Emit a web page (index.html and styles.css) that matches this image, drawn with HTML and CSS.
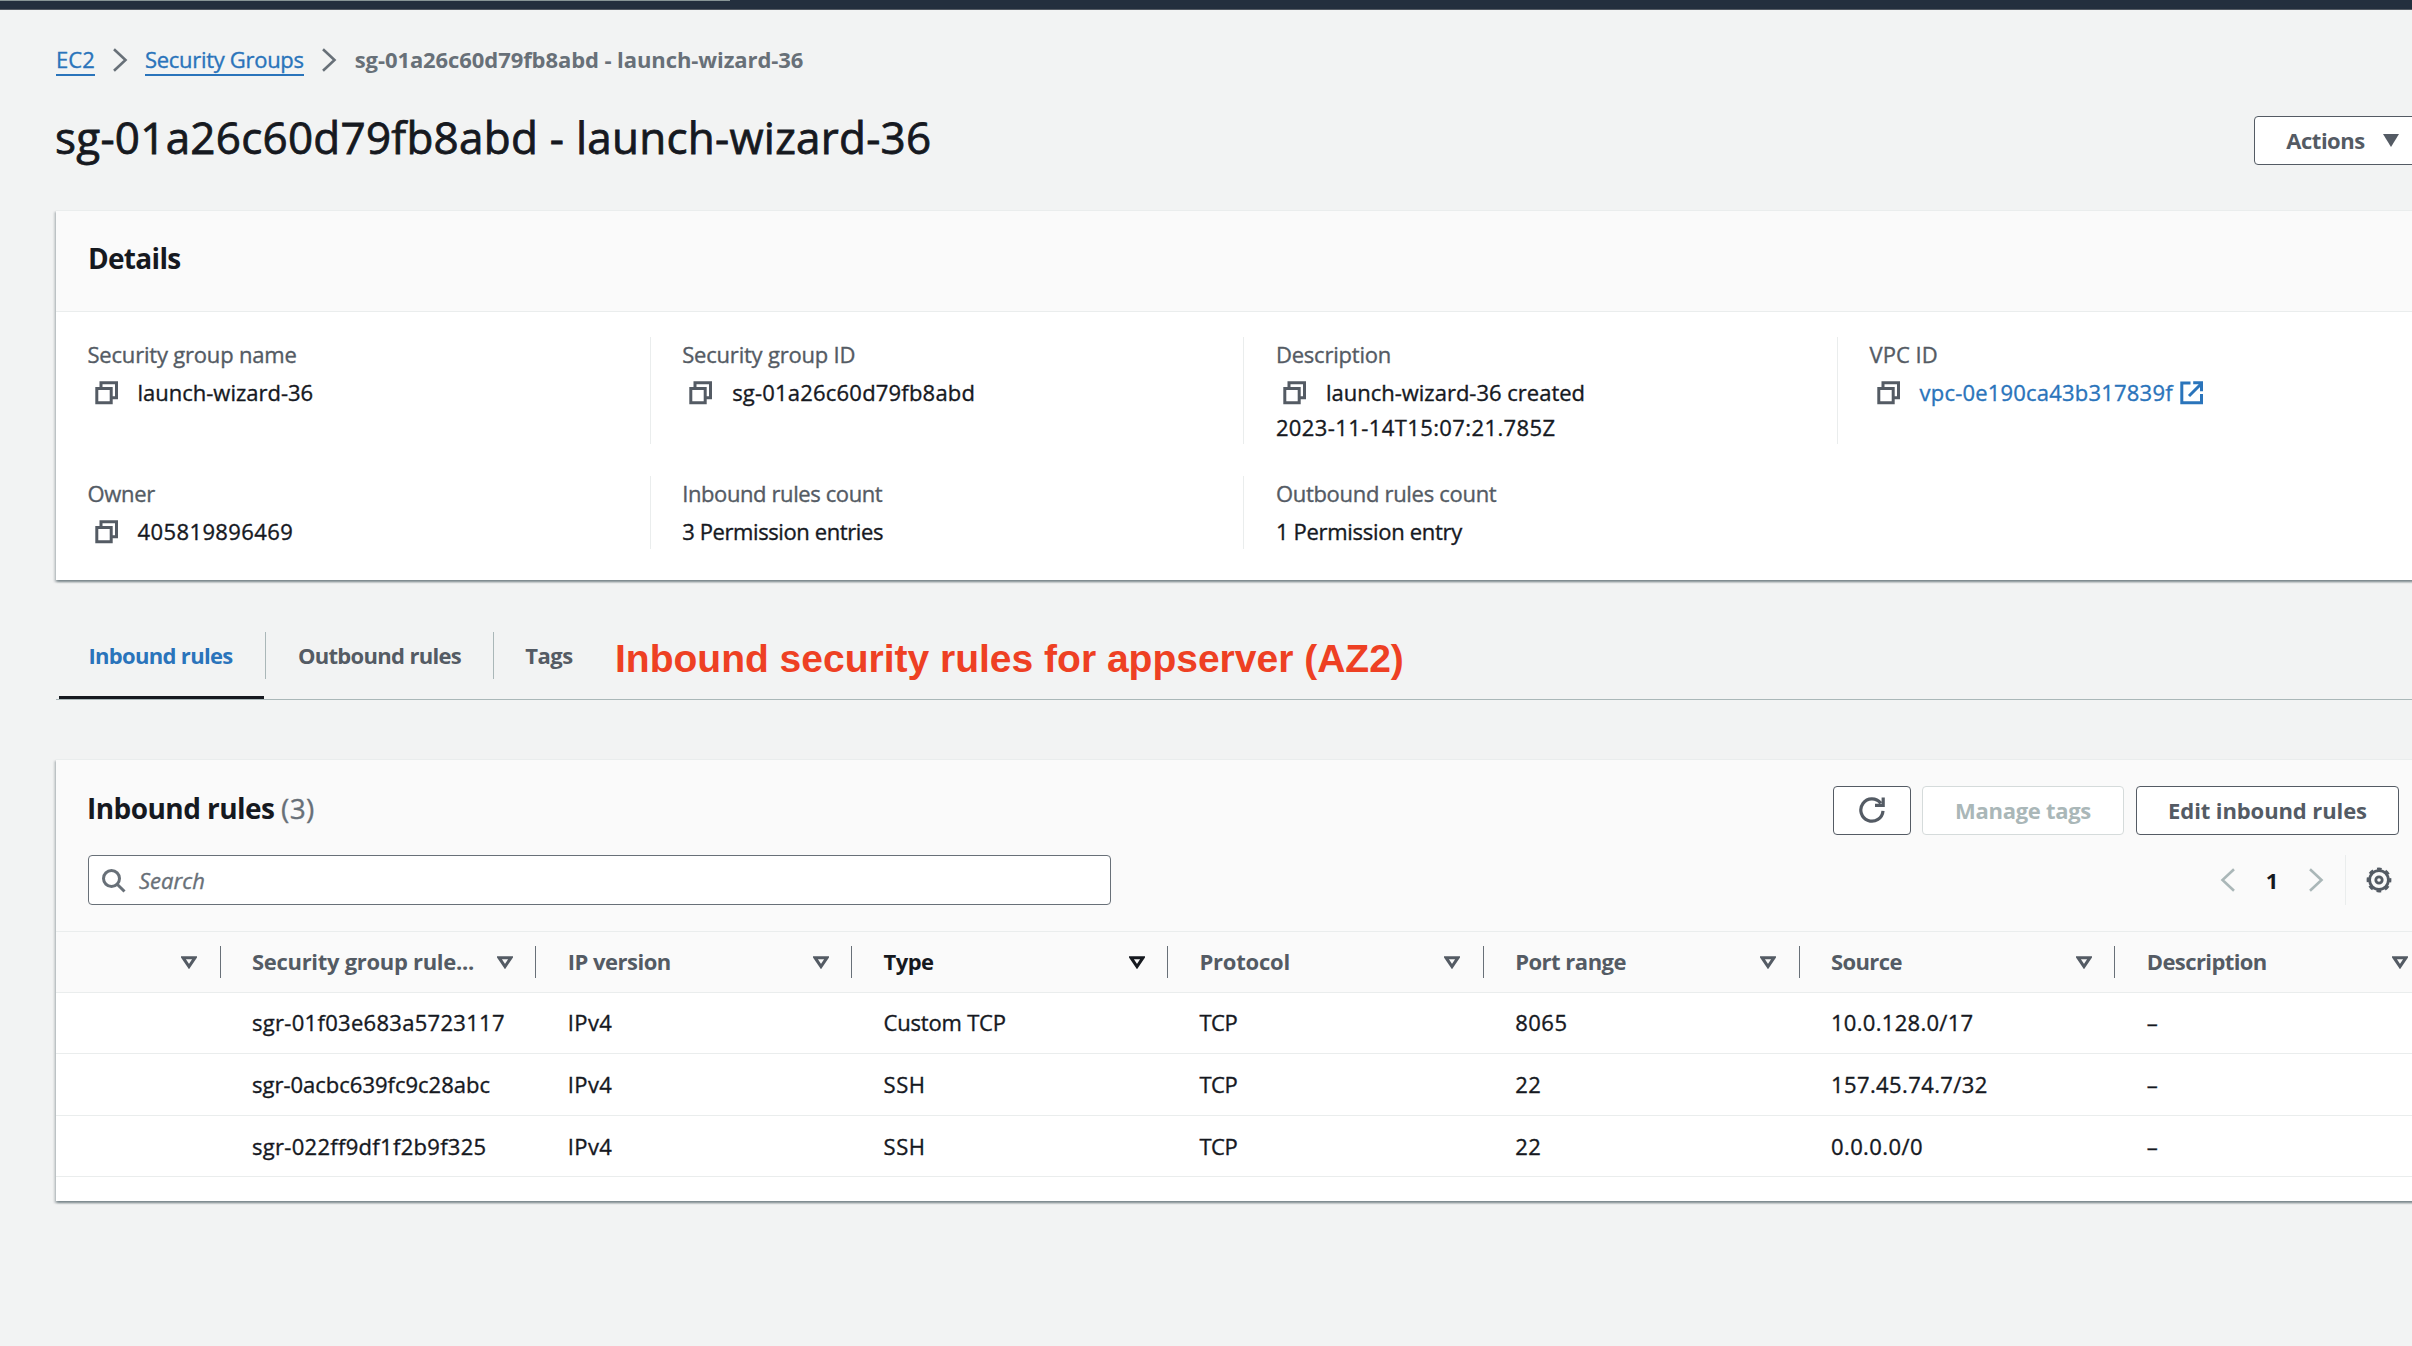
FILE: index.html
```html
<!DOCTYPE html>
<html lang="en">
<head>
<meta charset="utf-8">
<title>Security group - EC2</title>
<link rel="stylesheet" href="styles.css">
</head>
<body>
<svg class="defs" aria-hidden="true">
  <symbol id="copy" viewBox="0 0 24 24"><path d="M6 7V1.7h15.5v15h-5M1.8 7.4h14.4v14.3H1.8z"/></symbol>
  <symbol id="external" viewBox="0 0 24 24"><path d="M10.5 2H1.8v19.7h19.7V13M9 15 21 3M13.2 1.8h8.3v8.4"/></symbol>
  <symbol id="chevron" viewBox="0 0 16 24"><path d="M2 1.2 13.5 12 2 22.8"/></symbol>
  <symbol id="sort" viewBox="0 0 16 13"><path d="M2 1.7h12L8 10.6z"/></symbol>
</svg>

<div class="topbar"><div class="topbar-progress"></div></div>

<main class="page">
  <nav class="breadcrumb">
    <a class="crumb-link t1">EC2</a>
    <svg class="crumb-sep"><use href="#chevron"/></svg>
    <a class="crumb-link tm3">Security Groups</a>
    <svg class="crumb-sep"><use href="#chevron"/></svg>
    <span class="crumb-current">sg-01a26c60d79fb8abd - launch-wizard-36</span>
  </nav>

  <header class="page-header">
    <h1>sg-01a26c60d79fb8abd - launch-wizard-36</h1>
    <button class="btn btn-actions tm5">Actions<svg class="caret" viewBox="0 0 16 13"><path d="M0 0h16L8 13z"/></svg></button>
  </header>

  <section class="card details">
    <div class="details-header"><h2>Details</h2></div>
    <div class="details-grid">
      <div class="field"><div class="label tm2">Security group name</div><div class="value">
        <svg class="copy"><use href="#copy"/></svg>launch-wizard-36</div></div>
      <div class="field"><div class="label tm2">Security group ID</div><div class="value t2"><svg class="copy"><use href="#copy"/></svg>sg-01a26c60d79fb8abd</div></div>
      <div class="field"><div class="label tm2">Description</div><div class="value"><svg class="copy"><use href="#copy"/></svg>launch-wizard-36 created<br><span class="t4">2023-11-14T15:07:21.785Z</span></div></div>
      <div class="field"><div class="label">VPC ID</div><div class="value t2"><svg class="copy"><use href="#copy"/></svg><a class="link">vpc-0e190ca43b317839f<svg class="external"><use href="#external"/></svg></a></div></div>
      <div class="field"><div class="label tm3">Owner</div><div class="value t4"><svg class="copy"><use href="#copy"/></svg>405819896469</div></div>
      <div class="field"><div class="label tm4">Inbound rules count</div><div class="value tm4">3 Permission entries</div></div>
      <div class="field"><div class="label tm3">Outbound rules count</div><div class="value tm3">1 Permission entry</div></div>
    </div>
  </section>

  <div class="tabs">
    <div class="tab tab-active">Inbound rules</div>
    <div class="tab-divider"></div>
    <div class="tab tab-outbound">Outbound rules</div>
    <div class="tab-divider"></div>
    <div class="tab tab-tags tm5">Tags</div>
    <div class="annotation">Inbound security rules for appserver (AZ2)</div>
  </div>

  <section class="card rules">
    <div class="rules-header">
      <div class="rules-row">
        <h2>Inbound rules <span class="count">(3)</span></h2>
        <div class="buttons">
          <button class="btn btn-refresh"><svg class="refresh" viewBox="0 0 26 26"><path d="M24 13.8A11.1 11.1 0 1 1 21.7 6.2M24.2.5v7.8H16"/></svg></button>
          <button class="btn btn-manage tm3">Manage tags</button>
          <button class="btn btn-edit tm1">Edit inbound rules</button>
        </div>
      </div>
      <div class="rules-row filter-row">
        <div class="search">
          <svg class="search-icon" viewBox="0 0 24 24"><circle cx="9.5" cy="9.5" r="8"/><path d="m15.2 15.2 7.3 7.3"/></svg>
          <span class="placeholder">Search</span>
        </div>
        <div class="pager">
          <svg class="page-arrow page-prev"><use href="#chevron"/></svg>
          <span class="page-number">1</span>
          <svg class="page-arrow"><use href="#chevron"/></svg>
          <div class="pager-divider"></div>
          <svg class="gear" viewBox="0 0 26 26"><circle cx="13" cy="13" r="9.4"/><circle class="gear-teeth" cx="13" cy="13" r="11"/><circle cx="13" cy="13" r="3.2"/></svg>
        </div>
      </div>
    </div>

    <div class="table">
      <div class="tr thead">
        <div class="th"><span></span><svg class="sort"><use href="#sort"/></svg></div>
        <div class="th tm3"><span>Security group rule...</span><svg class="sort"><use href="#sort"/></svg></div>
        <div class="th tm5"><span>IP version</span><svg class="sort"><use href="#sort"/></svg></div>
        <div class="th th-sorted tm6"><span>Type</span><svg class="sort"><use href="#sort"/></svg></div>
        <div class="th tm2"><span>Protocol</span><svg class="sort"><use href="#sort"/></svg></div>
        <div class="th tm5"><span>Port range</span><svg class="sort"><use href="#sort"/></svg></div>
        <div class="th tm6"><span>Source</span><svg class="sort"><use href="#sort"/></svg></div>
        <div class="th tm6"><span>Description</span><svg class="sort"><use href="#sort"/></svg></div>
      </div>
      <div class="tr">
        <div class="td"></div><div class="td t3">sgr-01f03e683a5723117</div><div class="td t4">IPv4</div><div class="td tm2">Custom TCP</div><div class="td tm4">TCP</div><div class="td t5">8065</div><div class="td t3">10.0.128.0/17</div><div class="td">–</div>
      </div>
      <div class="tr tr-tall">
        <div class="td"></div><div class="td">sgr-0acbc639fc9c28abc</div><div class="td t4">IPv4</div><div class="td t5">SSH</div><div class="td tm4">TCP</div><div class="td t5">22</div><div class="td t4">157.45.74.7/32</div><div class="td">–</div>
      </div>
      <div class="tr tr-last">
        <div class="td"></div><div class="td t3">sgr-022ff9df1f2b9f325</div><div class="td t4">IPv4</div><div class="td t5">SSH</div><div class="td tm4">TCP</div><div class="td t5">22</div><div class="td t4">0.0.0.0/0</div><div class="td">–</div>
      </div>
    </div>
  </section>
</main>
</body>
</html>
```
FILE: styles.css
```css
* { box-sizing: border-box; }

body {
  margin: 0;
  width: 2412px;
  height: 1346px;
  overflow: hidden;
  background: #f2f3f3;
  color: #16191f;
  font: 22px/30px "Open Sans", "Noto Sans", sans-serif;
}

h1, h2 { margin: 0; }
svg { fill: none; stroke: currentColor; stroke-width: 3; flex: none; }
.defs { display: none; }

/* Slightly heavier regular weight */
.crumb-link, h1, .field, .td, .count, .placeholder { -webkit-text-stroke: 0.35px currentColor; }
h1 { -webkit-text-stroke-width: 0.8px; }

/* Letter-spacing steps, in tenths of a pixel (tm = negative) */
.t1 { letter-spacing: 0.1px; }
.t2 { letter-spacing: 0.2px; }
.t3 { letter-spacing: 0.3px; }
.t4 { letter-spacing: 0.4px; }
.t5 { letter-spacing: 0.5px; }
.tm1 { letter-spacing: -0.1px; }
.tm2 { letter-spacing: -0.2px; }
.tm3 { letter-spacing: -0.3px; }
.tm4 { letter-spacing: -0.4px; }
.tm5 { letter-spacing: -0.5px; }
.tm6 { letter-spacing: -0.6px; }

.topbar { height: 10px; background: #232f3e; border-bottom: 1px solid #545b64; }
.topbar-progress { width: 730px; height: 1px; background: #879596; }

/* The page is wider than the window, its right edge runs off screen */
.page { width: 2375px; margin-left: 56px; padding-top: 34px; }

.breadcrumb { display: flex; height: 32px; }
.crumb-link { color: #2a74bb; border-bottom: 2px solid #2a74bb; }
.crumb-sep { width: 16px; height: 24px; margin: 4px 17px 0 17px; color: #687078; stroke-width: 2.6; }
.crumb-current { margin-left: 1px; font-weight: 700; color: #687078; letter-spacing: -0.08px; }

.page-header { display: flex; justify-content: space-between; margin-top: 31px; height: 103px; }
h1 { margin-left: -1px; font-size: 44px; line-height: 60px; font-weight: 400; letter-spacing: 0.26px; }

.btn {
  display: flex;
  align-items: center;
  justify-content: center;
  height: 49px;
  padding: 0 0 1px;
  background: #fff;
  border: 1.5px solid #545b64;
  border-radius: 4px;
  color: #545b64;
  font: 700 22px/44px "Open Sans", "Noto Sans", sans-serif;
}
.btn-actions { width: 177px; margin-top: 9px; }
.caret { width: 16px; height: 13px; margin-left: 18px; fill: currentColor; stroke: none; }

.card {
  background: #fff;
  border-top: 1px solid #eaeded;
  box-shadow: 0 2px 2px rgba(0, 28, 36, 0.3), 2px 2px 2px rgba(0, 28, 36, 0.15), -2px 2px 2px rgba(0, 28, 36, 0.15);
}
.card h2 { font-size: 28px; font-weight: 700; letter-spacing: -0.56px; }

.details { height: 370px; }
.details-header { height: 101px; padding: 28px 32px; background: #fafafa; border-bottom: 1px solid #eaeded; }
.details-header h2 { line-height: 38px; letter-spacing: -0.7px; }
.details-grid {
  display: grid;
  grid-template-columns: 594.7px repeat(3, 593.7px);
  grid-template-rows: 107px 73px;
  row-gap: 32px;
  padding-top: 25px;
}
.field { padding-left: 31.5px; border-right: 1px solid #eaeded; line-height: 35px; white-space: nowrap; }
.field:nth-child(4), .field:nth-child(7) { border-right: 0; }
.label { margin-bottom: 3px; color: #545b64; }
.copy { width: 24px; height: 24px; margin: 0 19px 0 7px; vertical-align: -4px; color: #545b64; }
.link { color: #2a74bb; }
.external { width: 24px; height: 24px; margin-left: 7px; vertical-align: -4px; }

.tabs { display: flex; height: 68px; margin-top: 52px; border-bottom: 1px solid #aab7b8; }
.tab { height: 67px; text-align: center; line-height: 47px; font-weight: 700; color: #545b64; letter-spacing: -0.68px; }
.tab-active { width: 205px; margin-left: 3px; padding-right: 2px; color: #2a74bb; border-bottom: 3px solid #16191f; }
.tab-outbound { width: 227px; }
.tab-tags { width: 110px; letter-spacing: -0.5px; }
.tab-divider { width: 1px; height: 47px; background: #aab7b8; }
.tab-active + .tab-divider { margin-left: 1px; }
.annotation { margin-left: 11px; font: 700 39px/53px "Liberation Sans", Arial, sans-serif; color: #ee4023; white-space: nowrap; }

.rules { height: 442px; margin-top: 59px; }
.rules-header { height: 171px; padding: 26px 32px 0 31px; background: #fafafa; }
.rules-row { display: flex; justify-content: space-between; align-items: flex-start; }
.rules-row h2 { line-height: 44px; }
.count { font-weight: 400; letter-spacing: 0.37px; color: #687078; }
.buttons { display: flex; gap: 12px; }
.btn-refresh { width: 78px; margin-right: -0.5px; }
.refresh { width: 26px; height: 26px; stroke-width: 3.2; }
.btn-manage { width: 202px; color: #aab7b8; border-color: #d5dbdb; }
.btn-edit { width: 263px; }

.filter-row { margin-top: 20px; }
.search {
  display: flex;
  width: 1023px;
  height: 50px;
  margin-left: 1px;
  padding: 13px 0 0 13px;
  background: #fff;
  border: 1.5px solid #687078;
  border-radius: 4px;
  color: #687078;
}
.search-icon { width: 24px; height: 24px; }
.placeholder { margin: -4px 0 0 13px; font-style: italic; }
.pager { display: flex; align-items: center; height: 50px; padding-right: 7px; color: #aab7b8; }
.page-arrow { width: 16px; height: 24px; stroke-width: 2.6; }
.page-prev { transform: scaleX(-1); }
.page-number { width: 72px; text-align: center; font-weight: 700; color: #16191f; }
.pager-divider { width: 1px; height: 50px; margin: 0 20px 0 21px; background: #eaeded; }
.gear { width: 26px; height: 26px; color: #545b64; stroke-width: 2.8; }
.gear-teeth { stroke-dasharray: 4.6 4.04; stroke-dashoffset: 2.3; }

.tr {
  display: grid;
  grid-template-columns: 164.7px repeat(7, 315.8px);
  height: 61px;
  border-bottom: 1px solid #eaeded;
  line-height: 59px;
}
.tr-tall { height: 62px; line-height: 61px; }
.tr-last { line-height: 61px; }
.thead { height: 62px; background: #fafafa; border-top: 1px solid #eaeded; line-height: 59px; }
.th, .td { padding-left: 31.3px; white-space: nowrap; }
.th {
  display: flex;
  justify-content: space-between;
  padding-right: 23.5px;
  font-weight: 700;
  color: #545b64;
  background: linear-gradient(#687078, #687078) right 14px / 1px 32px no-repeat;
}
.th:last-child { background: none; }
.th-sorted { color: #16191f; }
.sort { width: 16px; height: 13px; margin-top: 24px; }
```
